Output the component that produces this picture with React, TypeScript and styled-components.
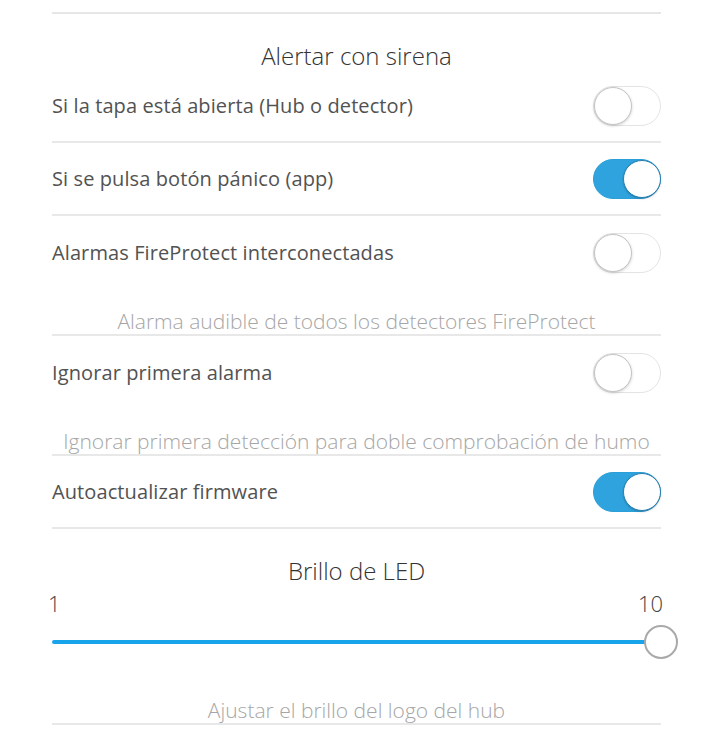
import React, { useState } from "react";
import styled, { createGlobalStyle } from "styled-components";

const GlobalStyle = createGlobalStyle`
  html, body {
    margin: 0;
    padding: 0;
    background: #ffffff;
  }
  body {
    font-family: "Open Sans", "Noto Sans", sans-serif;
    -webkit-font-smoothing: antialiased;
  }
`;

const Page = styled.div`
  width: 714px;
  height: 755px;
  overflow: hidden;
  padding: 12px 53px 0 52px;
  box-sizing: border-box;
`;

const TopRule = styled.div`
  height: 2px;
  background: #e6e6e6;
`;

const SectionTitle = styled.div`
  padding-top: 28px;
  line-height: 28px;
  font-size: 24px;
  font-weight: 300;
  color: #333333;
  text-align: center;
`;

const Row = styled.div<{ $divider?: boolean }>`
  height: 73px;
  display: flex;
  align-items: center;
  justify-content: space-between;
  border-bottom: ${(p) => (p.$divider ? "2px solid #e8e8e8" : "0")};
  box-sizing: border-box;
`;

const Label = styled.span`
  font-size: 20px;
  color: #525252;
  letter-spacing: 0.1px;
`;

const Hint = styled.div`
  padding-top: 19px;
  line-height: 26px;
  font-size: 21px;
  font-weight: 300;
  color: #a6a6a6;
  text-align: center;
  border-bottom: 2px solid #e8e8e8;
  white-space: nowrap;
`;

const Track = styled.button<{ $on: boolean }>`
  position: relative;
  width: 68px;
  height: 40px;
  padding: 0;
  border-radius: 20px;
  border: 1px solid ${(p) => (p.$on ? "#2b9fd9" : "#e4e4e4")};
  background: ${(p) => (p.$on ? "#2fa3de" : "#ffffff")};
  box-sizing: border-box;
  cursor: pointer;
  flex-shrink: 0;
`;

const Knob = styled.span<{ $on: boolean }>`
  position: absolute;
  top: 0px;
  left: ${(p) => (p.$on ? "29px" : "0px")};
  width: 38px;
  height: 38px;
  border-radius: 50%;
  background: #ffffff;
  box-sizing: border-box;
  border: 1px solid ${(p) => (p.$on ? "#2a7fae" : "#c4c4c4")};
  box-shadow: ${(p) =>
    p.$on ? "0 1px 2px rgba(0,0,0,0.2)" : "0 1px 3px rgba(0,0,0,0.18)"};
  transition: left 0.15s;
`;

const SliderBlock = styled.div`
  padding-top: 3px;
`;

const Scale = styled.div`
  display: flex;
  justify-content: space-between;
  font-size: 22px;
  font-weight: 300;
  color: #444444;
  line-height: 30px;
  margin: 0 -2px 0 -4px;
`;

const Rail = styled.div`
  position: relative;
  height: 34px;
  margin-top: 7px;
`;

const Fill = styled.div`
  position: absolute;
  left: 0;
  top: 15px;
  height: 4px;
  background: #17a4ea;
  border-radius: 2px;
`;

const Thumb = styled.div`
  position: absolute;
  top: 0;
  width: 34px;
  height: 34px;
  margin-left: -17px;
  border-radius: 50%;
  border: 2px solid #a9a9a9;
  background: #ffffff;
  box-sizing: border-box;
`;

const SliderHint = styled(Hint)`
  padding-top: 38px;
`;

function Toggle({ on, onChange }: { on: boolean; onChange: () => void }) {
  return (
    <Track $on={on} onClick={onChange} aria-pressed={on}>
      <Knob $on={on} />
    </Track>
  );
}

export default function App() {
  const [state, setState] = useState({
    tapa: false,
    panico: true,
    fire: false,
    ignorar: false,
    firmware: true,
  });
  const [brillo] = useState(10);

  const flip = (k: keyof typeof state) =>
    setState((prev) => ({ ...prev, [k]: !prev[k] }));

  const pct = ((brillo - 1) / 9) * 100;

  return (
    <>
      <GlobalStyle />
      <Page>
        <TopRule />
        <SectionTitle>Alertar con sirena</SectionTitle>
        <Row $divider>
          <Label>Si la tapa está abierta (Hub o detector)</Label>
          <Toggle on={state.tapa} onChange={() => flip("tapa")} />
        </Row>
        <Row $divider>
          <Label>Si se pulsa botón pánico (app)</Label>
          <Toggle on={state.panico} onChange={() => flip("panico")} />
        </Row>
        <Row>
          <Label>Alarmas FireProtect interconectadas</Label>
          <Toggle on={state.fire} onChange={() => flip("fire")} />
        </Row>
        <Hint>Alarma audible de todos los detectores FireProtect</Hint>
        <Row>
          <Label>Ignorar primera alarma</Label>
          <Toggle on={state.ignorar} onChange={() => flip("ignorar")} />
        </Row>
        <Hint>Ignorar primera detección para doble comprobación de humo</Hint>
        <Row $divider>
          <Label>Autoactualizar firmware</Label>
          <Toggle on={state.firmware} onChange={() => flip("firmware")} />
        </Row>
        <SectionTitle>Brillo de LED</SectionTitle>
        <SliderBlock>
          <Scale>
            <span>1</span>
            <span>10</span>
          </Scale>
          <Rail>
            <Fill style={{ width: `${pct}%` }} />
            <Thumb style={{ left: `${pct}%` }} />
          </Rail>
        </SliderBlock>
        <SliderHint>Ajustar el brillo del logo del hub</SliderHint>
      </Page>
    </>
  );
}
